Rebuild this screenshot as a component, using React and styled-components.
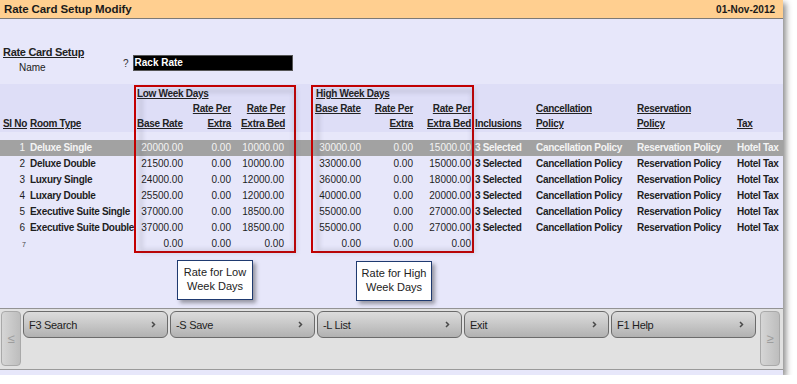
import React from "react";
import styled, { createGlobalStyle } from "styled-components";

const Global = createGlobalStyle`
  html, body { margin: 0; padding: 0; background: #ffffff; }
  body { font-family: "Liberation Sans", Arial, sans-serif; }
`;

const Panel = styled.div`
  width: 783px;
  height: 375px;
  background: #e7e7fa;
  display: flex;
  flex-direction: column;
  box-shadow: 3px 3px 6px rgba(0, 0, 0, 0.45);
`;

const TitleBar = styled.div`
  height: 18px;
  flex: none;
  background: #ffcf90;
  border-bottom: 1px solid #7d7a76;
  display: flex;
  align-items: center;
  justify-content: space-between;
  padding: 0 8px 0 4px;
`;

const Title = styled.div`
  font-size: 11.5px;
  font-weight: bold;
  letter-spacing: -0.1px;
  color: #1a1a1a;
`;

const DateText = styled.div`
  font-size: 10px;
  font-weight: bold;
  color: #1a1a1a;
`;

const FormArea = styled.div`
  height: 65px;
  flex: none;
  display: flex;
  box-sizing: border-box;
  padding: 26px 0 0 3px;
`;

const FormLabels = styled.div`
  width: 120px;
  display: flex;
  flex-direction: column;
`;

const SectionLabel = styled.div`
  font-size: 11px;
  font-weight: bold;
  letter-spacing: -0.3px;
  text-decoration: underline;
  line-height: 15px;
  color: #222;
`;

const FieldLabel = styled.div`
  font-size: 10px;
  line-height: 16px;
  padding-left: 16px;
  color: #222;
`;

const FieldRow = styled.div`
  display: flex;
  align-items: center;
  gap: 4px;
  margin-top: 10px;
  height: 16px;
`;

const Hint = styled.span`
  font-size: 10px;
  color: #333;
`;

const NameInput = styled.div`
  width: 160px;
  height: 16px;
  box-sizing: border-box;
  background: #000;
  border: 1px solid #555;
  color: #fff;
  font-size: 10px;
  font-weight: bold;
  line-height: 14px;
  padding-left: 1px;
`;

const TableArea = styled.div`
  position: relative;
  flex: 1;
`;

const cols = "28px 107px 50px 48px 54px 26px 50px 52px 58px 62px 101px 100px 47px";

const HeaderBand = styled.div`
  display: grid;
  grid-template-columns: ${cols};
  grid-template-rows: 15px 15px 15px;
  padding: 2px 0 1px;
  background: #dedef7;
`;

const HeadCell = styled.div`
  grid-column: ${(p) => p.$col};
  grid-row: ${(p) => p.$row};
  font-size: 10px;
  font-weight: bold;
  letter-spacing: -0.3px;
  line-height: 15px;
  color: #222;
  white-space: nowrap;
  text-align: ${(p) => (p.$right ? "right" : "left")};
  padding: ${(p) => (p.$right ? "0 2px 0 0" : `0 0 0 ${p.$pad ?? 2}px`)};
  span { text-decoration: underline; }
`;

const Rows = styled.div`
  margin-top: 8px;
`;

const Row = styled.div`
  display: grid;
  grid-template-columns: ${cols};
  height: 16px;
  line-height: 16px;
  background: ${(p) => (p.$selected ? "#a2a2a2" : "transparent")};
  color: ${(p) => (p.$selected ? "#f4f4f4" : "#1e1e1e")};
`;

const Cell = styled.div`
  grid-column: ${(p) => p.$col};
  font-size: 10px;
  font-weight: ${(p) => (p.$bold ? "bold" : "normal")};
  letter-spacing: ${(p) => (p.$bold ? "-0.3px" : "0")};
  white-space: nowrap;
  text-align: ${(p) => (p.$right ? "right" : "left")};
  padding: ${(p) => (p.$right ? `0 ${p.$pr ?? 2}px 0 0` : `0 0 0 ${p.$pad ?? 2}px`)};
`;

const SmallNo = styled.span`
  font-size: 7px;
  color: #444;
`;

const RedBox = styled.div`
  position: absolute;
  top: 1px;
  left: ${(p) => p.$left}px;
  width: ${(p) => p.$w}px;
  height: 168px;
  box-sizing: border-box;
  border: 2px solid #c40000;
  pointer-events: none;
  &::before {
    content: "";
    position: absolute;
    top: 2px;
    left: 3px;
    width: 100%;
    height: 100%;
    box-sizing: border-box;
    border: 4px solid rgba(60, 60, 90, 0.15);
    filter: blur(2px);
  }
`;

const Callout = styled.div`
  position: absolute;
  top: ${(p) => p.$top}px;
  left: ${(p) => p.$left}px;
  width: 76px;
  height: 40px;
  box-sizing: border-box;
  background: #fff;
  border: 1.5px solid #1f3a70;
  box-shadow: 3px 3px 4px rgba(0, 0, 0, 0.35);
  font-size: 11px;
  line-height: 14px;
  color: #222;
  text-align: center;
  padding-top: 4px;
`;

const Footer = styled.div`
  flex: none;
  height: 58px;
  background: #e1e1e1;
  border-top: 1px solid #939393;
  border-bottom: 1px solid #9a9a9a;
  margin-bottom: 5px;
  display: flex;
  align-items: flex-start;
  gap: 2px;
  padding: 2px 0 0 1px;
`;

const ScrollBtn = styled.div`
  width: 20px;
  height: 55px;
  box-sizing: border-box;
  border: 1px solid #a9a9a9;
  border-radius: 4px;
  background: linear-gradient(to right, #d6d6d6, #bdbdbd);
  display: flex;
  align-items: center;
  justify-content: center;
  color: #9d9d9d;
  font-size: 13px;
  margin-left: ${(p) => p.$ml || 0}px;
`;

const Btn = styled.div`
  width: 145px;
  height: 27px;
  box-sizing: border-box;
  border: 1px solid #6b6b6b;
  border-radius: 6px;
  background: linear-gradient(#dcdcdc, #c9c9c9 45%, #b1b1b1);
  display: flex;
  align-items: center;
  justify-content: space-between;
  padding: 0 11px 0 5px;
  font-size: 11px;
  letter-spacing: -0.3px;
  color: #1e1e1e;
`;

const Chevron = () => (
  <svg width="5" height="7" viewBox="0 0 5 7">
    <polyline points="1,1 3.5,3.5 1,6" fill="none" stroke="#4a4a4a" strokeWidth="1.5" />
  </svg>
);

const rows = [
  ["1", "Deluxe Single", "20000.00", "0.00", "10000.00", "30000.00", "0.00", "15000.00"],
  ["2", "Deluxe Double", "21500.00", "0.00", "10000.00", "33000.00", "0.00", "15000.00"],
  ["3", "Luxury Single", "24000.00", "0.00", "12000.00", "36000.00", "0.00", "18000.00"],
  ["4", "Luxary Double", "25500.00", "0.00", "12000.00", "40000.00", "0.00", "20000.00"],
  ["5", "Executive Suite Single", "37000.00", "0.00", "18500.00", "55000.00", "0.00", "27000.00"],
  ["6", "Executive Suite Double", "37000.00", "0.00", "18500.00", "55000.00", "0.00", "27000.00"],
];

const buttons = ["F3 Search", "-S Save", "-L List", "Exit", "F1 Help"];

const H = ({ col, row, right, pad, children }) => (
  <HeadCell $col={col} $row={row} $right={right} $pad={pad}>
    <span>{children}</span>
  </HeadCell>
);

export default function App() {
  return (
    <>
      <Global />
      <Panel>
        <TitleBar>
          <Title>Rate Card Setup Modify</Title>
          <DateText>01-Nov-2012</DateText>
        </TitleBar>
        <FormArea>
          <FormLabels>
            <SectionLabel>Rate Card Setup</SectionLabel>
            <FieldLabel>Name</FieldLabel>
          </FormLabels>
          <FieldRow>
            <Hint>?</Hint>
            <NameInput>Rack Rate</NameInput>
          </FieldRow>
        </FormArea>
        <TableArea>
          <HeaderBand>
            <H col="1" row="3" pad={3}>Sl No</H>
            <H col="2" row="3">Room Type</H>
            <H col="3 / span 3" row="1">Low Week Days </H>
            <H col="4" row="2" right>Rate Per </H>
            <H col="5" row="2" right>Rate Per </H>
            <H col="3" row="3">Base Rate</H>
            <H col="4" row="3" right>Extra</H>
            <H col="5" row="3" right>Extra Bed</H>
            <H col="7 / span 3" row="1" pad={3}>High Week Days</H>
            <H col="7" row="2">Base Rate</H>
            <H col="8" row="2" right>Rate Per </H>
            <H col="9" row="2" right>Rate Per </H>
            <H col="8" row="3" right>Extra</H>
            <H col="9" row="3" right>Extra Bed</H>
            <H col="10" row="3">Inclusions</H>
            <H col="11" row="2" pad={1}>Cancellation </H>
            <H col="11" row="3" pad={1}>Policy</H>
            <H col="12" row="2" pad={1}>Reservation </H>
            <H col="12" row="3" pad={1}>Policy</H>
            <H col="13" row="3" pad={1}>Tax</H>
          </HeaderBand>
          <Rows>
            {rows.map((r, i) => (
              <Row key={r[0]} $selected={i === 0}>
                <Cell $col="1" $right $pr={3}>{r[0]}</Cell>
                <Cell $col="2" $bold>{r[1]}</Cell>
                <Cell $col="3" $right>{r[2]}</Cell>
                <Cell $col="4" $right>{r[3]}</Cell>
                <Cell $col="5" $right $pr={3}>{r[4]}</Cell>
                <Cell $col="7" $right>{r[5]}</Cell>
                <Cell $col="8" $right>{r[6]}</Cell>
                <Cell $col="9" $right>{r[7]}</Cell>
                <Cell $col="10" $bold>3 Selected</Cell>
                <Cell $col="11" $bold $pad={1}>Cancellation Policy</Cell>
                <Cell $col="12" $bold $pad={1}>Reservation Policy</Cell>
                <Cell $col="13" $bold $pad={1}>Hotel Tax</Cell>
              </Row>
            ))}
            <Row>
              <Cell $col="1" $pad={22}><SmallNo>7</SmallNo></Cell>
              <Cell $col="3" $right>0.00</Cell>
              <Cell $col="4" $right>0.00</Cell>
              <Cell $col="5" $right $pr={3}>0.00</Cell>
              <Cell $col="7" $right>0.00</Cell>
              <Cell $col="8" $right>0.00</Cell>
              <Cell $col="9" $right>0.00</Cell>
            </Row>
          </Rows>
          <RedBox $left={134} $w={162} />
          <RedBox $left={311} $w={163} />
          <Callout $top={176} $left={177}>Rate for Low<br />Week Days</Callout>
          <Callout $top={177} $left={356}>Rate for High<br />Week Days</Callout>
        </TableArea>
        <Footer>
          <ScrollBtn>≤</ScrollBtn>
          {buttons.map((b) => (
            <Btn key={b}>
              <span>{b}</span>
              <Chevron />
            </Btn>
          ))}
          <ScrollBtn $ml={2}>≥</ScrollBtn>
        </Footer>
      </Panel>
    </>
  );
}
